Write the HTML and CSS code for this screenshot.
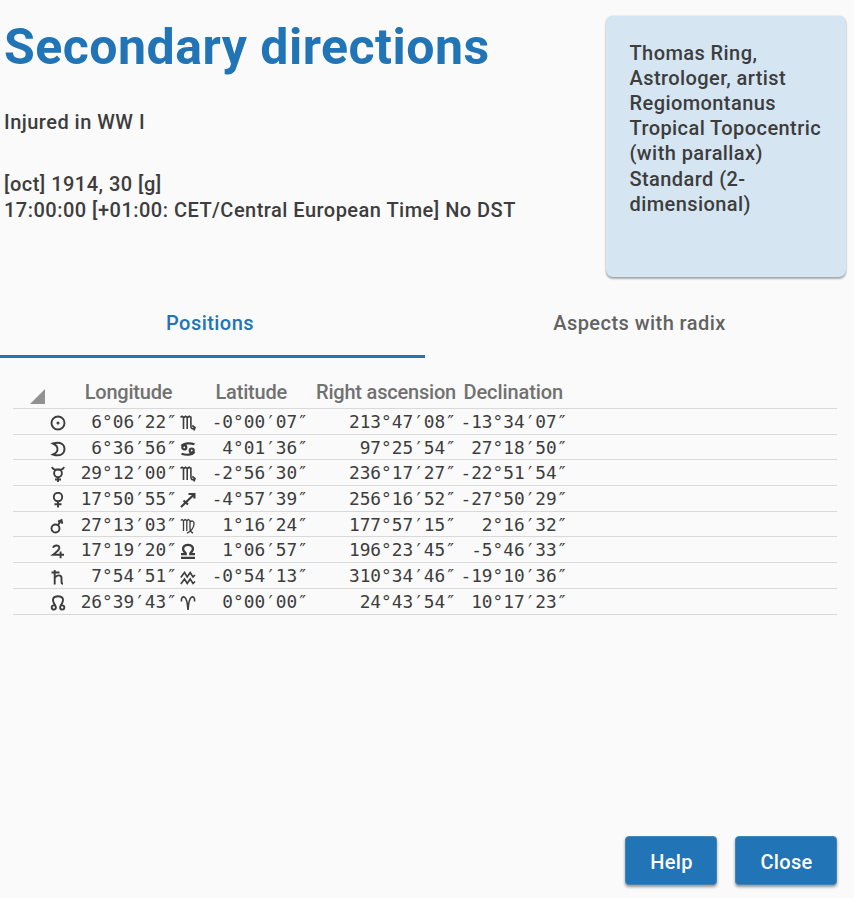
FILE: index.html
```
<!DOCTYPE html>
<html lang="en">
<head>
<meta charset="utf-8">
<title>Secondary directions</title>
<link rel="stylesheet" href="styles.css">
</head>
<body>
<svg width="0" height="0" class="defs">
  <symbol id="sun" viewBox="0 0 16 16"><circle cx="8" cy="8" r="6.5"/><circle cx="8" cy="8" r=".6"/></symbol>
  <symbol id="moon" viewBox="0 0 16 16"><path d="M3 2.500C11 0 14.500 4 14.500 8S11 16 3 13.500C9 11 9 5 3 2.500z"/></symbol>
  <symbol id="mercury" viewBox="0 0 16 16"><path d="M2 1c.7 1.900 2 2.600 3.400 2.600h5.200c1.400 0 2.700-.7 3.400-2.600M8 11v5M5 13.500h6"/><circle cx="8" cy="7.300" r="3.900"/></symbol>
  <symbol id="venus" viewBox="0 0 16 16"><circle cx="8" cy="5" r="4.200"/><path d="M8 9v6.500M4.500 12.200h7"/></symbol>
  <symbol id="mars" viewBox="0 0 16 16"><circle cx="5.500" cy="10.500" r="4"/><path d="M8 7.300l3.300-5M8 3.700l3.500-1.600.8 3.600"/></symbol>
  <symbol id="jupiter" viewBox="0 0 16 16"><path d="M3 4.800C4 1.800 9.300 1.500 9.300 4.800 9.300 7.500 6.500 9 3 11.700h11M10.600 8.500v6.700"/></symbol>
  <symbol id="saturn" viewBox="0 0 16 16"><path d="M1.500 3.500h8M4.700 1v14.500M4.700 9C7 5.500 11.500 5.600 11.500 9v3.500c0 1.500.3 2.300 1.500 2.300"/></symbol>
  <symbol id="node" viewBox="0 0 16 16"><path d="M5.300 10.500C.8 4 3.500 1.200 8 1.200s7.200 2.800 2.700 9.300"/><circle cx="3.800" cy="12.500" r="2.100"/><circle cx="12.200" cy="12.500" r="2.100"/></symbol>
  <symbol id="scorpio" viewBox="0 0 16 16"><path d="M.5 2.300l1.500-1 1.500 1V14M3.500 2.800l2-1.500 1.700 1V14M7.200 2.800l2-1.500 1.700 1V11c0 2.500 1.500 3.500 3.600 1.800M12.300 10.500l2.700 2-1 3"/></symbol>
  <symbol id="cancer" viewBox="0 0 16 16"><path d="M1.500 4.800C4 2 10 1.700 14.500 3.300M14.500 11C12 14.300 6 14.300 1.500 12.700"/><circle cx="4.300" cy="6.400" r="2"/><circle cx="11.700" cy="9.500" r="2"/></symbol>
  <symbol id="sagittarius" viewBox="0 0 16 16"><path d="M1 15L14 2.500M8.500 2h5.900v4.500M3.500 8.500l4.500 4"/></symbol>
  <symbol id="virgo" viewBox="0 0 16 16"><path d="M.8 2.500l1.200-1 1.500 1V13M3.500 3L5 1.500l1.800 1V13M6.800 3l1.500-1.500 1.700 1V11c0 2 1 3.200 3 4.200M10 4.500c2-3 4.500-1 4 2C13.500 10 11.500 13 7 15.200"/></symbol>
  <symbol id="libra" viewBox="0 0 16 16"><path d="M1 11.200h4.800v-.8C1 6.500 3 1.800 8 1.800s7 4.700 2.200 8.600v.8H15M1 14.800h14"/></symbol>
  <symbol id="aquarius" viewBox="0 0 16 16"><path d="M.8 8.500l3.700-5L7.200 8l3-4.500L13 8l2-2M.8 15l3.700-5 2.700 4.500 3-4.500 2.800 4.500 2-2"/></symbol>
  <symbol id="aries" viewBox="0 0 16 16"><path d="M1.500 6.500C.8 2.500 3 1.300 4.500 2.200 6.500 3.500 7.500 8 8 15 8.500 8 9.500 3.500 11.500 2.200c1.500-.9 3.700.3 3 4.300"/></symbol>
</svg>
<div class="dialog">
  <header class="top">
    <div class="event">
      <h1>Secondary directions</h1>
      <p class="name">Injured in WW I</p>
      <p class="date">[oct] 1914, 30 [g]<br>17:00:00 [+01:00: CET/Central European Time] No DST</p>
    </div>
    <aside class="card">Thomas Ring, Astrologer, artist<br>Regiomontanus<br>Tropical Topocentric (with parallax)<br>Standard (2-dimensional)</aside>
  </header>
  <nav class="tabs">
    <div class="tab active">Positions</div>
    <div class="tab">Aspects with radix</div>
  </nav>
  <section class="table">
    <div class="row head"><span><i class="corner"></i></span><span>Longitude</span><span></span><span class="lat">Latitude</span><span>Right ascension</span><span>Declination</span></div>
    <div class="row"><svg class="planet"><use href="#sun"/></svg><span>6°06′22″</span><svg><use href="#scorpio"/></svg><span>-0°00′07″</span><span>213°47′08″</span><span>-13°34′07″</span></div>
    <div class="row"><svg class="planet"><use href="#moon"/></svg><span>6°36′56″</span><svg class="bold"><use href="#cancer"/></svg><span>4°01′36″</span><span>97°25′54″</span><span>27°18′50″</span></div>
    <div class="row"><svg class="planet"><use href="#mercury"/></svg><span>29°12′00″</span><svg><use href="#scorpio"/></svg><span>-2°56′30″</span><span>236°17′27″</span><span>-22°51′54″</span></div>
    <div class="row"><svg class="planet"><use href="#venus"/></svg><span>17°50′55″</span><svg class="bold"><use href="#sagittarius"/></svg><span>-4°57′39″</span><span>256°16′52″</span><span>-27°50′29″</span></div>
    <div class="row"><svg class="planet"><use href="#mars"/></svg><span>27°13′03″</span><svg class="thin"><use href="#virgo"/></svg><span>1°16′24″</span><span>177°57′15″</span><span>2°16′32″</span></div>
    <div class="row"><svg class="planet"><use href="#jupiter"/></svg><span>17°19′20″</span><svg class="bold"><use href="#libra"/></svg><span>1°06′57″</span><span>196°23′45″</span><span>-5°46′33″</span></div>
    <div class="row"><svg class="planet"><use href="#saturn"/></svg><span>7°54′51″</span><svg><use href="#aquarius"/></svg><span>-0°54′13″</span><span>310°34′46″</span><span>-19°10′36″</span></div>
    <div class="row"><svg class="planet"><use href="#node"/></svg><span>26°39′43″</span><svg><use href="#aries"/></svg><span>0°00′00″</span><span>24°43′54″</span><span>10°17′23″</span></div>
  </section>
  <footer class="actions"><button class="help">Help</button><button class="close">Close</button></footer>
</div>
</body>
</html>
```
FILE: styles.css
```
* { box-sizing: border-box; }
body { margin: 0; background: #fafafa; color: #3d3d3d; font: 500 20px/26px Roboto, sans-serif; }
.defs { display: block; }
.dialog { height: 898px; display: flex; flex-direction: column; overflow: hidden; }
.top { display: flex; justify-content: space-between; height: 290px; padding: 15px 8.500px 0 4px; }
h1 { margin: 0; color: #2174b5; font: 700 50px/64px Roboto, sans-serif; letter-spacing: .5px; white-space: nowrap; }
p { margin: 0; letter-spacing: .48px; white-space: nowrap; }
.name { margin-top: 30px; }
.date { margin-top: 36px; }
.card { width: 240px; height: 261px; margin-top: .5px; padding: 25px 14px 0 24px; border-radius: 7px; background: #d5e5f2; box-shadow: 0 2px 2px rgba(0,0,0,.3), 0 0 2px rgba(0,0,0,.2); line-height: 25.2px; letter-spacing: .42px; }
.tabs { display: flex; height: 68px; letter-spacing: .45px; }
.tab { flex: 1; padding-top: 20px; text-align: center; color: #626262; }
.tab.active { flex: 0 0 425px; padding-right: 5px; color: #2174b5; border-bottom: 3px solid #2174b5; }
.table { margin: 17px 17px 0 13px; }
.row { display: grid; grid-template-columns: 67px 97px 20.500px 110.500px 148px 111.500px; height: 25.700px; border-bottom: 1px solid #d9d9d9; font: 17.800px/25px "DejaVu Sans Mono", monospace; text-align: right; }
.head { height: 34px; font: 500 20px/34px Roboto, sans-serif; letter-spacing: -.2px; color: #717171; text-align: center; white-space: nowrap; }
.head span:nth-child(5) { padding-left: 8px; }
.head span:nth-child(6) { padding-left: 3px; letter-spacing: -.1px; }
.lat { padding-right: 3px; }
.corner { display: block; width: 15px; height: 15px; margin: 14px 0 0 17px; background: #929292; clip-path: polygon(100% 0, 100% 100%, 0 100%); }
.row svg { width: 16px; height: 16px; margin: 6px 0 0 3px; fill: none; stroke: #3d3d3d; stroke-width: 1.600; }
.row svg.planet { margin-left: 37px; stroke-width: 1.900; }
.row svg.bold { stroke-width: 2.200; }
.row svg.thin { stroke-width: 1.300; }
.actions { display: flex; justify-content: flex-end; gap: 18px; margin-top: auto; padding: 0 17px 13px 0; }
button { height: 49px; padding: 2px 0 0 1px; border: 1px solid #4485b8; border-radius: 4px; background: #2174b5; color: #fff; font: 500 20px Roboto, sans-serif; letter-spacing: .3px; box-shadow: 0 2px 3px rgba(0,0,0,.4); }
.help { width: 92px; }
.close { width: 102px; }
```
